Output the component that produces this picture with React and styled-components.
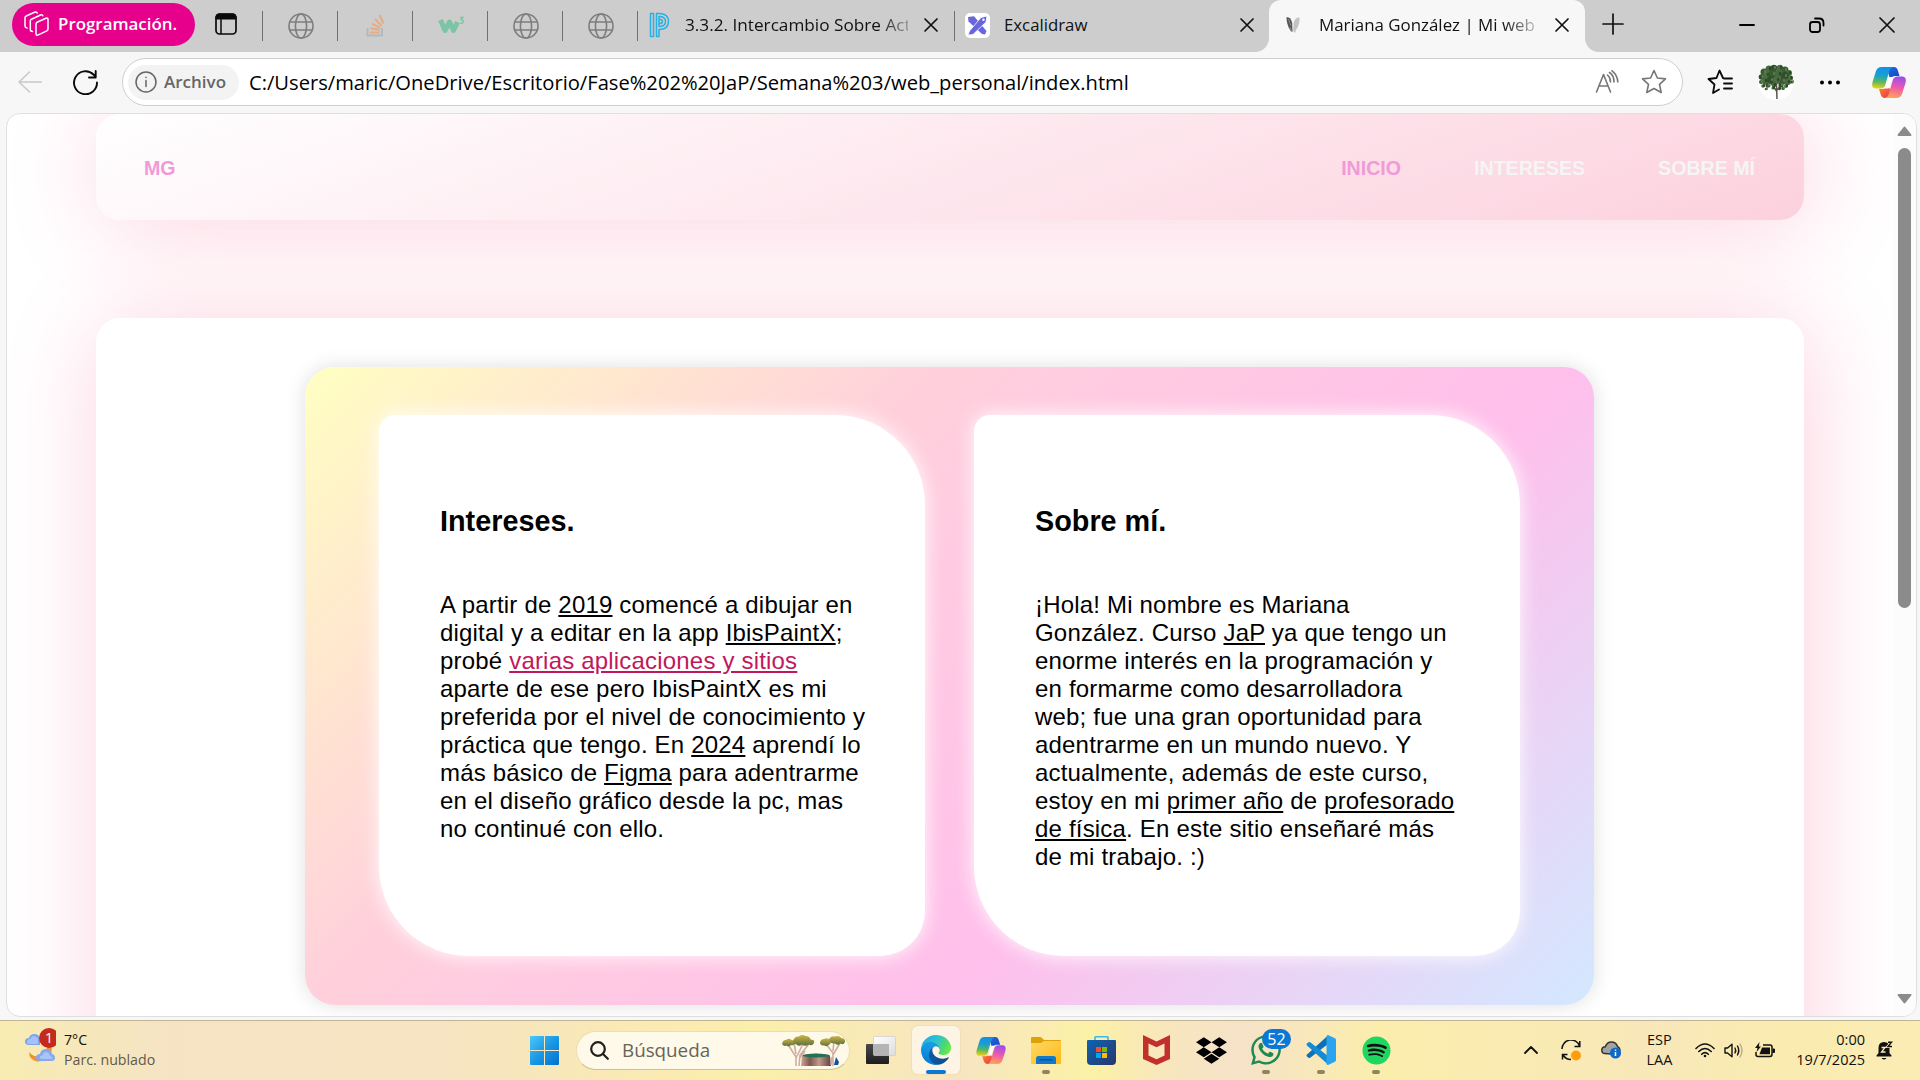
import React from "react";
import styled, { createGlobalStyle } from "styled-components";
import { FaSpotify, FaDropbox, FaWhatsapp } from "react-icons/fa";

const UI = `"Open Sans", "Noto Sans", sans-serif`;
const ARIAL = `"Liberation Sans", Arial, sans-serif`;

const Global = createGlobalStyle`
  * { box-sizing: border-box; }
  html, body { margin: 0; padding: 0; background: #f7f7f7; overflow: hidden; }
  svg { display: block; flex: none; }
`;

const Screen = styled.div`
  width: 1920px;
  height: 1080px;
  overflow: hidden;
  display: flex;
  flex-direction: column;
  background: #f7f7f7;
  font-family: ${UI};
  color: #111;
`;

const Label = styled.span`
  font-size: ${(p) => p.$size}px;
  font-weight: ${(p) => p.$weight || 400};
  color: ${(p) => p.$color || "#111"};
  line-height: ${(p) => p.$line || p.$size * 1.4}px;
  white-space: nowrap;
`;

/* ---------- tab strip ---------- */

const TabStrip = styled.div`
  height: 52px;
  flex: none;
  display: flex;
  align-items: stretch;
  background: #cdcdcd;
`;

const GroupPill = styled.div`
  margin: 3px 0 0 12px;
  width: 183px;
  height: 43px;
  border-radius: 22px;
  background: #e6008c;
  display: flex;
  align-items: center;
  gap: 9px;
  padding: 0 0 2px 12px;
`;

const TabActions = styled.div`
  width: 67px;
  display: flex;
  padding: 13px 0 0 20px;
`;

const PinnedTab = styled.div`
  width: 75px;
  display: flex;
  padding-top: 11px;
`;

const PinnedIcon = styled.div`
  flex: 1;
  height: 29px;
  display: flex;
  align-items: center;
  justify-content: center;
  padding-left: 2px;
`;

const Divider = styled.div`
  width: 1px;
  height: 30px;
  background: #707070;
  flex: none;
`;

const Tab = styled.div`
  width: ${(p) => p.$width}px;
  display: flex;
  padding-top: 11px;
`;

const TabBody = styled.div`
  flex: 1;
  min-width: 0;
  height: 28px;
  display: flex;
  align-items: center;
  padding: 0 ${(p) => p.$right}px 0 ${(p) => p.$left}px;
  gap: ${(p) => p.$gap}px;
`;

const TabTitle = styled.div`
  flex: 1;
  min-width: 0;
  display: flex;
  ${(p) => p.$fade && `mask-image: linear-gradient(90deg, #000 ${p.$fade - 34}px, rgba(0,0,0,.2) ${p.$fade}px);`}
`;

const Flare = styled.div`
  width: 14px;
  background: #f7f7f7;
  display: flex;
  &::before {
    content: "";
    flex: 1;
    background: #cdcdcd;
    border-radius: ${(p) => (p.$side === "left" ? "0 0 14px 0" : "0 0 0 14px")};
  }
`;

const ActiveTab = styled.div`
  width: 316px;
  background: #f7f7f7;
  border-radius: 12px 12px 0 0;
  padding-top: 11px;
  display: flex;
`;

const ActiveBack = styled.div`
  background: #cdcdcd;
  display: flex;
`;

const NewTab = styled.div`
  padding: 13px 0 0 3px;
  flex: 1;
`;

const WindowButtons = styled.div`
  display: flex;
  padding-bottom: 2px;
`;

const WindowButton = styled.div`
  width: 70px;
  padding-left: 3px;
  display: flex;
  align-items: center;
  justify-content: center;
`;

/* ---------- address bar ---------- */

const Toolbar = styled.div`
  height: 61px;
  flex: none;
  display: flex;
  align-items: center;
  padding: 0 14px 1px 18px;
`;

const NavButtons = styled.div`
  display: flex;
  gap: 31px;
  width: 104px;
`;

const Address = styled.div`
  width: 1561px;
  height: 48px;
  border-radius: 24px;
  border: 1px solid #cfcfcf;
  background: #fff;
  display: flex;
  align-items: center;
  padding: 0 15px 0 5px;
`;

const FileChip = styled.div`
  width: 111px;
  height: 35px;
  border-radius: 18px;
  background: #f3f3f3;
  display: flex;
  align-items: center;
  gap: 7px;
  padding-left: 7px;
  margin-right: 10px;
`;

const Url = styled.div`
  flex: 1;
  display: flex;
`;

const AddressIcons = styled.div`
  display: flex;
  align-items: center;
  gap: 22px;
`;

const Extras = styled.div`
  flex: 1;
  display: flex;
  align-items: center;
  padding-left: 24px;
`;

const Extra = styled.div`
  margin-right: ${(p) => p.$gap}px;
`;

/* ---------- web page ---------- */

const Viewport = styled.div`
  margin: 0 3px 0 6px;
  height: 904px;
  flex: none;
  border: 1px solid #dfdfdf;
  border-radius: 14px;
  background: #fff;
  display: flex;
  overflow: hidden;
`;

const Page = styled.div`
  flex: 1;
  min-width: 0;
  overflow: hidden;
  font-family: ${ARIAL};
  padding: 0 89px;
  display: flex;
  flex-direction: column;
`;

const SiteHeader = styled.header`
  height: 106px;
  flex: none;
  border-radius: 24px;
  background: linear-gradient(160deg, #fff, #fcd1de);
  box-shadow: 5px 5px 100px #fcd1de;
  display: flex;
  align-items: center;
  justify-content: space-between;
  padding: 2px 49px 0 48px;
`;

const SiteNav = styled.nav`
  display: flex;
  gap: 73px;
`;

const SiteLink = styled.a`
  font: bold 19.6px/24px ${ARIAL};
  color: ${(p) => (p.$active ? "#f09ad8" : "#f5f5f5")};
`;

const Main = styled.main`
  margin-top: 98px;
  height: 1300px;
  flex: none;
  border-radius: 24px;
  background: #fff;
  box-shadow: 5px 5px 100px #fcd1de;
  display: flex;
  align-items: flex-start;
  padding: 49px 0 0 209px;
`;

const Rainbow = styled.section`
  width: 1289px;
  height: 638px;
  border-radius: 30px;
  background: linear-gradient(135deg, #ffffc2, #ffd0dc 33%, #ffbfec 66%, #d3e8ff);
  box-shadow: 0 0 20px rgba(0, 0, 0, 0.13);
  display: flex;
  gap: 49px;
  padding: 47.5px 74px 49px;
`;

const Card = styled.article`
  width: 546px;
  border-radius: 16px 90px 45px 90px;
  background: #fff;
  box-shadow: 0 0 20px #fff;
  padding: 89px 56px 0 61px;
`;

const CardTitle = styled.h2`
  margin: 0 0 53px;
  font: bold 28.8px/34px ${ARIAL};
  color: #000;
`;

const CardText = styled.p`
  margin: 0;
  font: 24px/28px ${ARIAL};
  letter-spacing: 0.19px;
  color: #000;
`;

const PinkLink = styled.u`
  color: #c2185b;
`;

const Scrollbar = styled.div`
  width: 23px;
  background: #fcfcfc;
  display: flex;
  flex-direction: column;
  align-items: center;
  padding: 12px 0 12px;
`;

const Thumb = styled.div`
  width: 13px;
  height: 460px;
  border-radius: 7px;
  background: #8b8b8b;
  margin: 12px 0 auto;
`;

/* ---------- taskbar ---------- */

const Taskbar = styled.footer`
  margin-top: 3px;
  height: 60px;
  flex: none;
  border-top: 1px solid #bdb594;
  background: linear-gradient(90deg, #f8ecb2 0, #f5e3c4 170px, #f6e4c2 440px, #faeab4 640px, #fbefaa 760px, #f8e8bb 900px, #f7e5c2 960px, #fcf1a6 1090px, #f8e6be 1170px, #f6e2c8 1240px, #fbeeac 1380px, #faebb2 1500px, #f8e8ba 1660px, #faecb0 1780px, #faecb4 1920px);
  display: flex;
  align-items: flex-start;
`;

const Weather = styled.div`
  width: 520px;
  display: flex;
  gap: 8px;
  padding: 6px 0 0 25px;
`;

const TwoLines = styled.div`
  display: flex;
  flex-direction: column;
  align-items: ${(p) => p.$align};
`;

const Tile = styled.div`
  width: 48px;
  height: 48px;
  margin: 5px 7px 0 0;
  border-radius: 6px;
  background: ${(p) => (p.$active ? "rgba(255,250,242,.72)" : "transparent")};
  box-shadow: ${(p) => (p.$active ? "0 0 0 1px rgba(225,205,150,.28)" : "none")};
  display: flex;
  flex-direction: column;
  align-items: center;
  justify-content: space-between;
  flex: none;
  position: relative;
`;

const TileIcon = styled.div`
  height: 44px;
  padding-top: 4px;
  display: flex;
  align-items: center;
`;

const Indicator = styled.div`
  width: ${(p) => (p.$wide ? 20 : 8)}px;
  height: 4px;
  border-radius: 2px;
  background: ${(p) => (p.$wide ? "#0a78d4" : "#8f8460")};
`;

const Badge = styled.div`
  position: absolute;
  left: 20px;
  top: 3px;
  width: 29px;
  height: 20px;
  border-radius: 10px;
  background: #0a78d4;
  display: flex;
  align-items: center;
  justify-content: center;
`;

const Search = styled.div`
  margin: 10px 7px 0 1px;
  width: 274px;
  height: 39px;
  border-radius: 20px;
  background: #fef9e8;
  border: 1px solid #ecdfae;
  border-bottom-color: #cfc18c;
  display: flex;
  align-items: center;
  padding: 0 9px 0 13px;
`;

const SearchLabel = styled.div`
  flex: 1;
  padding-left: 13px;
  display: flex;
`;

const Tray = styled.div`
  flex: 1;
  height: 58px;
  display: flex;
  align-items: center;
  justify-content: flex-end;
  padding-right: 27px;
`;

const TrayItem = styled.div`
  margin-right: ${(p) => p.$gap}px;
  display: flex;
`;

/* ---------- drawings ---------- */

const Stroke = ({ w, h, color = "#111", sw = 1.5, children }) => (
  <svg width={w} height={h || w} viewBox={`0 0 ${w} ${h || w}`} fill="none" stroke={color} strokeWidth={sw} strokeLinecap="round" strokeLinejoin="round">
    {children}
  </svg>
);

const Globe = () => (
  <Stroke w={26} color="#7d7d7d" sw={1.6}>
    <circle cx="13" cy="13" r="12" />
    <ellipse cx="13" cy="13" rx="5.6" ry="12" />
    <path d="M2 9h22M2 17h22" />
  </Stroke>
);

const CloseX = ({ large }) => (
  <Stroke w={16} color="#111" sw={1.7}>
    <path d={large ? "M1 1l14 14M15 1L1 15" : "M2 2l12 12M14 2L2 14"} />
  </Stroke>
);

const GroupIcon = () => (
  <Stroke w={25} color="#fff" sw={1.5}>
    <path d="M13 11.300 22 7.200Q24 6.500 24 8.500V18Q24 19.300 22.800 19.900L14.300 23.900Q12 24.800 12 22.500V13Q12 11.800 13 11.300Z" />
    <path d="M8.500 20.500Q6.300 20.300 6.300 18.500V10Q6.300 8.800 7.500 8.200L16.500 4Q18.300 3.300 18.800 4.800" />
    <path d="M3 17Q1 16.500 1 15V6.800Q1 5.500 2.200 5L10.500 1.200Q12.700 .5 13.200 2" />
  </Stroke>
);

const TabActionsIcon = () => (
  <svg width="22" height="22" viewBox="0 0 22 22">
    <rect x="1" y="1" width="20" height="20" rx="3.500" fill="none" stroke="#0a0a0a" strokeWidth="1.700" />
    <path d="M1 6V4Q1 1 4 1H18Q21 1 21 4V6Z" fill="#0a0a0a" stroke="#0a0a0a" />
    <path d="M6 6V21" stroke="#0a0a0a" strokeWidth="1.500" />
  </svg>
);

const StackIcon = () => (
  <svg width="20" height="23" viewBox="0 0 20 23" fill="none">
    <path d="M1.500 14V21.500H16V14" stroke="#b3b9be" strokeWidth="2" />
    <path d="M4 18.500H13.500M4.300 14.300 13.600 15.900M5.800 9.600 14.200 13.800M9 5 15.500 11.800M13.500 1 17.500 9.500" stroke="#e8ac82" strokeWidth="2.100" />
  </svg>
);

const W3Icon = () => (
  <svg width="26" height="20" viewBox="0 0 26 20" fill="none" stroke="#7cc4a6">
    <path d="M2.500 4 7 14.500 11.500 6 15.500 14.500 19.500 6" strokeWidth="5" strokeLinejoin="round" />
    <path d="M22 1.500H25L23.200 3.800Q25.500 4 25.200 6Q24.500 8 22 7.200" strokeWidth="1.300" />
  </svg>
);

const PIcon = () => (
  <Stroke w={21} h={26} color="#27b1e6" sw={1.5}>
    <path d="M1.500 1.500V24.500H4.500V1.500ZM7.500 1.500V24.500M7.500 1.500H11Q19.500 2 19.500 9.500T11 17.500H10V24.500H7.500M10 14.500H11Q16.500 14 16.500 9.500T11 4.500H10ZM10 11.500H11Q13.500 11.300 13.500 9.500T11 7.500" />
  </Stroke>
);

const ExcalidrawIcon = () => (
  <svg width="25" height="25" viewBox="0 0 25 25">
    <rect width="25" height="25" rx="5" fill="#fff" />
    <path d="M3 4 9 3.200 21.500 18 20 21.500 17 21 3.500 8.500Z" fill="#6965db" />
    <path d="M22 3 16 4.500 4.500 18 3 22 8 21.500 21 9Z" fill="#6965db" stroke="#fff" strokeWidth="0.800" />
    <circle cx="18.500" cy="6.800" r="1.200" fill="#fff" />
  </svg>
);

const WingsIcon = () => (
  <svg width="14" height="18" viewBox="0 0 14 18">
    <path d="M.5 1Q5 1 6.200 7L6.500 16 4.500 14.500Q.5 9 .5 1Z" fill="#555" />
    <path d="M13.500 1.500Q9 1 7.600 7L7.200 15 9 17 10 14Q14 9 13.500 1.500Z" fill="#c4c4c4" />
    <path d="M2.500 3 5 10M4 11 5.500 16" stroke="#999" strokeWidth=".8" />
  </svg>
);

const Copilot = ({ w = 34, h = 31, id }) => (
  <svg width={w} height={h} viewBox="0 0 34 31">
    <defs>
      <linearGradient id={id + "a"} x1="0.500" y1="0" x2="0.400" y2="1">
        <stop offset="0" stopColor="#1190e8" /><stop offset=".4" stopColor="#1b9fd0" /><stop offset=".7" stopColor="#5ab85c" /><stop offset="1" stopColor="#f0cf1a" />
      </linearGradient>
      <linearGradient id={id + "b"} x1=".6" y1="0" x2=".4" y2="1">
        <stop offset="0" stopColor="#9a4cf0" /><stop offset=".5" stopColor="#ee5aa8" /><stop offset="1" stopColor="#ffa552" />
      </linearGradient>
      <linearGradient id={id + "c"} x1="0" y1="0" x2="1" y2="1">
        <stop offset="0" stopColor="#1c6fe0" /><stop offset="1" stopColor="#1a3fc4" />
      </linearGradient>
      <linearGradient id={id + "d"} x1="0" y1="0" x2="1" y2="1">
        <stop offset="0" stopColor="#ff8a1e" /><stop offset="1" stopColor="#e8325a" />
      </linearGradient>
    </defs>
    <path d="M15 0H22Q25 0 26 4L27.500 9H23Q20 9 19 12L17 9Z" fill={`url(#${id}c)`} />
    <path d="M19 31H13Q9.500 31 8.500 27L7 22H11Q14 22 15 19L18 22Z" fill={`url(#${id}d)`} />
    <path d="M9.500 0H21Q18 1 17 5L13.500 17Q12.500 21.500 8.500 21.500H4Q-1 21.500 .5 15L4 4Q5.500 0 9.500 0Z" fill={`url(#${id}a)`} />
    <path d="M24.500 31H13Q16 30 17 26L20.500 14Q21.500 9.500 25.500 9.500H30Q35 9.500 33.500 16L30 27Q28.500 31 24.500 31Z" fill={`url(#${id}b)`} />
    <path d="M18.500 10H21.500Q20 11.500 19 15L17.500 20Q17 21.500 15.500 21.500H13Q14.200 20.500 15 17.500L16.500 12.500Q17 10.500 18.500 10Z" fill="#fff" />
  </svg>
);

const leaves = [
  [6, 8, 3.5], [11, 5, 3.5], [16, 4, 3.2], [22, 4, 3.2], [27, 6, 3.5], [31, 9, 3], [3.5, 13, 2.8], [9, 11, 4], [15, 10, 4.5], [21, 10, 4.5],
  [27, 12, 4], [32.5, 14, 2.6], [3, 18, 2], [7, 17, 3.4], [13, 16, 4], [19, 16, 4], [25, 17, 3.6], [30, 18, 3], [34, 18, 1.500],
  [5, 22, 1.800], [10, 21, 2.600], [16, 21, 2.400], [23, 21, 2.600], [28, 22, 2], [8, 25, 1.300], [15, 24, 1.600], [25, 24.500, 1.600], [21, 25, 1.200],
];

const Tree = () => (
  <svg width="36" height="36" viewBox="0 0 36 36">
    <circle cx="18" cy="18" r="18" fill="#fff" />
    <path d="M18.300 14 19 35M18.500 27 13 19M19 26 25 19" stroke="#5b5146" strokeWidth="1.500" fill="none" />
    {leaves.map(([x, y, r], i) => (
      <circle key={i} cx={x} cy={y} r={r} fill={["#3a5a33", "#456a3e", "#304e2b", "#4b6e42"][i % 4]} />
    ))}
    {leaves.map(([x, y], i) => (
      <ellipse key={i} cx={x + 1} cy={y - 0.5} rx="0.900" ry="1.700" fill={["#5f8254", "#263f22"][i % 2]} />
    ))}
  </svg>
);

const WeatherIcon = () => (
  <svg width="31" height="36" viewBox="0 0 31 36">
    <path d="M22 20A10 10 0 0 1 4 25Q4 33 12 34.500Q22 35 26 26Q28 20 25 18Z" fill="#f0932b" />
    <path d="M4 18Q0 18 0 14.500Q0 11 4 11Q5 7 9.500 7Q14 7 15 12V18Z" fill="#7fa4ee" />
    <path d="M3 17Q1 15 3 12.500Q6 12 7 9.500Q11 8 13 12V17Z" fill="#a6c1f7" />
    <path d="M15 34Q11 34 11 30.500Q11 27 15 27Q16 22 21 22Q26 22 27 27Q30 27.500 30 31Q30 34 26.500 34Z" fill="#86a9ee" />
    <path d="M16 32Q14 31 15 29Q18 29 18.500 26Q23 23 25 29Q28 30 27 32Z" fill="#aac4f8" />
    <circle cx="24" cy="11" r="10" fill="#c42b1c" />
    <text x="24" y="16" textAnchor="middle" fontFamily="Open Sans, sans-serif" fontSize="14" fill="#fff">1</text>
  </svg>
);

const WindowsLogo = () => (
  <svg width="29" height="29" viewBox="0 0 29 29">
    <defs>
      <linearGradient id="win" x1="0" y1="0" x2="1" y2="1">
        <stop offset="0" stopColor="#4cc8fb" /><stop offset=".5" stopColor="#1a98e4" /><stop offset="1" stopColor="#0470cf" />
      </linearGradient>
    </defs>
    <path fill="url(#win)" d="M1 0H14V14H0V1Q0 0 1 0ZM15 0H28Q29 0 29 1V14H15ZM0 15H14V29H1Q0 29 0 28ZM15 15H29V28Q29 29 28 29H15Z" />
  </svg>
);

const Savanna = () => (
  <svg width="63" height="31" viewBox="0 0 63 31">
    <defs>
      <linearGradient id="stump" x1="0" x2="1" y1="0" y2="0">
        <stop offset="0" stopColor="#d0a794" /><stop offset=".3" stopColor="#7c5850" /><stop offset=".6" stopColor="#c39a88" /><stop offset="1" stopColor="#5d4044" />
      </linearGradient>
      <linearGradient id="leaf" x1="0" x2="0" y1="0" y2="1">
        <stop offset="0" stopColor="#c9b548" /><stop offset=".5" stopColor="#98923f" /><stop offset="1" stopColor="#55713f" />
      </linearGradient>
    </defs>
    <path d="M52 30 54 22 57 27 56 30Z" fill="#14509c" />
    <path d="M20 20.500Q34 17 48 20.500L49 31H19Z" fill="url(#stump)" />
    <ellipse cx="34" cy="20.500" rx="13.500" ry="1.900" fill="#1f7254" />
    <g stroke="#cfaca4" strokeWidth="1.600" fill="none">
      <path d="M14 31 14 22 7 11M14 23 21 9M14 19 12 8M17 31 18 20 27 9M17 24 23 16" />
      <path d="M51 31 51 18 44 9M51 20 58 8M51 16 52 6M49 30 50 22" />
    </g>
    <g fill="url(#leaf)">
      <path d="M0 9Q1 4.500 4 5Q7 2.500 9.500 5Q13 5 13 8Q12 11 9 10Q7 12.500 4.500 10.500Q2 12 0 9Z" />
      <path d="M11 6Q12.500 1 17 1.500Q20-1 23.500 1Q28 1 28.500 4.500Q33 4.500 32 8Q30 11.500 27 9.500Q23 12 20 9.500Q17 12 14.500 9.500Q11 9 11 6Z" />
      <path d="M38 7.500Q38.500 4 42 4Q46 2 48 5.500Q50 8.500 47 9.500Q45 12.500 42.500 10.500Q38 11 38 7.500Z" />
      <path d="M47 4.500Q49 .5 53 1.500Q57 0 59.500 3Q63.500 3.500 63 7Q61.500 10.500 58.500 8.500Q56 11 53 8.500Q48 9 47 4.500Z" />
    </g>
  </svg>
);

const TaskViewIcon = () => (
  <svg width="30" height="28" viewBox="0 0 30 28">
    <defs>
      <linearGradient id="tvd" x1="0" y1="0" x2="0" y2="1"><stop offset="0" stopColor="#4a4a4a" /><stop offset="1" stopColor="#1d1d1d" /></linearGradient>
      <linearGradient id="tvl" x1="0" y1="0" x2="1" y2="1"><stop offset="0" stopColor="#fff" /><stop offset="1" stopColor="#dcdcdc" /></linearGradient>
    </defs>
    <rect x="0" y="8" width="23" height="20" rx="1" fill="url(#tvd)" />
    <rect x="7.500" y="0.500" width="22" height="19" rx="1" fill="url(#tvl)" stroke="#c8c8c8" strokeWidth=".6" />
    <rect x="8" y="8" width="15" height="11.500" fill="#b4b4b4" />
  </svg>
);

const EdgeIcon = () => (
  <svg width="30" height="30" viewBox="0 0 256 256">
    <defs>
      <linearGradient id="e1" x1="0" y1=".5" x2="1" y2=".6"><stop offset="0" stopColor="#0c59a4" /><stop offset="1" stopColor="#114a8b" /></linearGradient>
      <linearGradient id="e2" x1=".6" y1="0" x2=".3" y2="1"><stop offset="0" stopColor="#1b9de2" /><stop offset=".4" stopColor="#1595df" /><stop offset="1" stopColor="#0078d7" /></linearGradient>
      <linearGradient id="e3" x1="0" y1=".2" x2="1" y2=".6"><stop offset="0" stopColor="#20a8e8" /><stop offset=".45" stopColor="#2bc3d2" /><stop offset=".8" stopColor="#4fd86c" /><stop offset="1" stopColor="#66eb4e" /></linearGradient>
    </defs>
    <path fill="url(#e1)" d="M231 190.500c-3.400 1.800-6.900 3.400-10.500 4.700a101.700 101.700 0 0 1-35.900 6.500c-47.300 0-88.500-32.500-88.500-74.300 0-11.400 6.400-21.900 16.400-27.300-42.800 1.800-53.800 46.400-53.800 72.500 0 73.900 68.100 81.400 82.800 81.400 7.900 0 19.800-2.300 27-4.600l1.300-.4a128.300 128.300 0 0 0 66.600-52.800 4 4 0 0 0-5.400-5.700z" />
    <path fill="url(#e2)" d="M105.700 241.400a79.200 79.200 0 0 1-22.700-21.300 80.700 80.700 0 0 1 29.500-120c3.200-1.500 8.500-4.100 15.600-4a32.400 32.400 0 0 1 25.700 13 31.900 31.900 0 0 1 6.300 18.700c0-.2 24.500-79.600-80-79.600-43.900 0-80 41.600-80 78.200a130.200 130.200 0 0 0 12.100 56 128 128 0 0 0 156.400 67 75.500 75.500 0 0 1-62.800-8z" />
    <path fill="url(#e3)" d="M152.300 148.900c-.9 1-3.400 2.500-3.400 5.600 0 2.600 1.700 5.200 4.800 7.300 14.400 10.100 41.700 8.700 41.700 8.700a59.600 59.600 0 0 0 30.300-8.300 61.400 61.400 0 0 0 30.400-52.900c.3-22.400-8-37.300-11.300-43.900C223.500 23.900 177.700 0 128 0A128 128 0 0 0 0 126.200c.5-36.500 36.800-66 80-66 3.500 0 23.500.3 42 10 16.300 8.600 24.900 19 30.800 29.200 6.200 10.700 7.300 24.200 7.300 29.500 0 5.400-2.700 13.300-7.800 20z" />
  </svg>
);

const FolderIcon = () => (
  <svg width="30" height="27" viewBox="0 0 30 27">
    <defs><linearGradient id="fo" x1="0" y1="0" x2="1" y2="1"><stop offset="0" stopColor="#ffd968" /><stop offset="1" stopColor="#fdb813" /></linearGradient></defs>
    <path d="M0 1Q0 0 1 0H9Q10 0 11 1L13 3H29Q30 3 30 4V10H0Z" fill="#e0a008" />
    <path d="M0 6H10L13 4H30V26Q30 27 29 27H1Q0 27 0 26Z" fill="url(#fo)" />
    <path d="M5 27V21.500Q5 19 7.500 19H22.500Q25 19 25 21.500V27Z" fill="#1079c9" />
    <path d="M8.500 22.800H21.500" stroke="#0b4f93" strokeWidth="1.300" />
  </svg>
);

const StoreIcon = () => (
  <svg width="29" height="29" viewBox="0 0 29 29">
    <defs><linearGradient id="st" x1="0" y1="0" x2="1" y2="1"><stop offset="0" stopColor="#0e63b4" /><stop offset="1" stopColor="#28366b" /></linearGradient></defs>
    <path d="M8 5.500V1.500Q8 .8 8.700 .8H20.300Q21 .8 21 1.500V5.500" fill="none" stroke="#35b9ee" strokeWidth="1.600" />
    <path d="M0 5Q0 4 1 4H28Q29 4 29 5V25Q29 29 25 29H4Q0 29 0 25Z" fill="url(#st)" />
    <path fill="#f25022" d="M9 11h5v5H9z" /><path fill="#7fba00" d="M15 11h5v5h-5z" />
    <path fill="#00a4ef" d="M9 17h5v5H9z" /><path fill="#ffb900" d="M15 17h5v5h-5z" />
  </svg>
);

const McAfeeIcon = () => (
  <svg width="27" height="30" viewBox="0 0 27 30">
    <path d="M0 0 13.500 6.500 27 0V24L13.500 30 0 24ZM5.500 8.500V20.500L13.500 24.200 21.500 20.500V8.500L13.500 12.300Z" fill="#c32f2d" fillRule="evenodd" />
  </svg>
);

const VsCodeIcon = () => (
  <svg width="30" height="30" viewBox="0 0 30 30">
    <path d="M22 0.500 1 19.500Q0 20.500 1 21.500L2.500 22.800Q3.300 23.300 4.200 22.700L22 9Z" fill="#0f6fb8" />
    <path d="M22 29.500 1 10.500Q0 9.500 1 8.500L2.500 7.200Q3.300 6.700 4.200 7.300L22 21Z" fill="#138bd6" />
    <path d="M22 0 29 3.200Q30 3.700 30 5V25Q30 26.300 29 26.800L22 30Q20 30 20.500 28V2Q20.500 0 22 0Z" fill="#2aa4ee" />
  </svg>
);

const SpotifyMark = styled.div`
  width: 29px;
  height: 29px;
  border-radius: 50%;
  background: radial-gradient(#111 62%, transparent 64%);
  color: #1ed760;
  font-size: 29px;
  line-height: 0;
`;

const pinned = ["globe", "stack", "w3", "globe", "globe"];

export default function App() {
  return (
    <Screen>
      <Global />
      <TabStrip>
        <GroupPill>
          <GroupIcon />
          <Label $size={16.9} $weight={600} $color="#fff">Programación.</Label>
        </GroupPill>
        <TabActions><TabActionsIcon /></TabActions>
        {pinned.map((kind, i) => (
          <PinnedTab key={i}>
            <Divider />
            <PinnedIcon>
              {kind === "globe" && <Globe />}
              {kind === "stack" && <StackIcon />}
              {kind === "w3" && <W3Icon />}
            </PinnedIcon>
          </PinnedTab>
        ))}
        <Tab $width={317}>
          <Divider />
          <TabBody $left={11} $right={15} $gap={15}>
            <PIcon />
            <TabTitle $fade={227}><Label $size={17.2}>3.3.2. Intercambio Sobre Act</Label></TabTitle>
            <CloseX />
          </TabBody>
        </Tab>
        <Tab $width={301}>
          <Divider />
          <TabBody $left={10} $right={0} $gap={14}>
            <ExcalidrawIcon />
            <TabTitle><Label $size={16.8}>Excalidraw</Label></TabTitle>
            <CloseX />
          </TabBody>
        </Tab>
        <Flare $side="left" />
        <ActiveBack>
          <ActiveTab>
            <TabBody $left={17} $right={15} $gap={19}>
              <WingsIcon />
              <TabTitle $fade={218}><Label $size={16.9}>Mariana González | Mi web</Label></TabTitle>
              <CloseX />
            </TabBody>
          </ActiveTab>
        </ActiveBack>
        <Flare $side="right" />
        <NewTab>
          <Stroke w={22} color="#111" sw={1.7}><path d="M11 1V21M1 11H21" /></Stroke>
        </NewTab>
        <WindowButtons>
          <WindowButton><Stroke w={16} color="#000" sw={1.8}><path d="M1 8H15" /></Stroke></WindowButton>
          <WindowButton>
            <Stroke w={16} color="#000" sw={1.8}>
              <rect x="1" y="5" width="10" height="10" rx="2.500" />
              <path d="M6 1.500H10Q14.500 1.500 14.500 6V8.500" />
            </Stroke>
          </WindowButton>
          <WindowButton><CloseX large /></WindowButton>
        </WindowButtons>
      </TabStrip>

      <Toolbar>
        <NavButtons>
          <Stroke w={24} color="#c9c9c9" sw={1.6}><path d="M23.500 12H1M11.500 2 1 12 11.500 22" /></Stroke>
          <Stroke w={25} color="#0a0a0a" sw={1.9}><path d="M24 12.500A11.500 11.500 0 1 1 20.500 4.500L22.500 6.500M22.700 1V7.500H16" /></Stroke>
        </NavButtons>
        <Address>
          <FileChip>
            <Stroke w={22} color="#666" sw={1.5}><circle cx="11" cy="11" r="10" /><path d="M11 9.500V15.500M11 6.300V6.500" /></Stroke>
            <Label $size={17} $weight={600} $color="#666">Archivo</Label>
          </FileChip>
          <Url><Label $size={20.15} $color="#000">C:/Users/maric/OneDrive/Escritorio/Fase%202%20JaP/Semana%203/web_personal/index.html</Label></Url>
          <AddressIcons>
            <Stroke w={24} color="#767676" sw={1.6}>
              <path d="M1.500 22 8.500 4.500 15.500 22M4 16H13M12.500 5Q15.500 7.500 15.500 12M14.500 2.500Q19 5.500 19 12M17 .8Q22.500 5 22.800 12" />
            </Stroke>
            <Stroke w={26} color="#767676" sw={1.6}>
              <path d="M13 1.500 16.400 9 24.500 9.900 18.500 15.400 20.200 23.500 13 19.500 5.800 23.500 7.500 15.400 1.500 9.900 9.600 9Z" />
            </Stroke>
          </AddressIcons>
        </Address>
        <Extras>
          <Extra $gap={25}>
            <Stroke w={26} color="#0a0a0a" sw={1.8}>
              <path d="M16 9 12.500 1.500 9.500 9 1.500 10 7.500 15.500 6 24 12 20.500M17 9.500H25M17 14.500H25M17 19.500H25" />
            </Stroke>
          </Extra>
          <Extra $gap={26}><Tree /></Extra>
          <Extra $gap={32}>
            <svg width="20" height="5" viewBox="0 0 20 5"><circle cx="2" cy="2.500" r="2" /><circle cx="10" cy="2.500" r="2" /><circle cx="18" cy="2.500" r="2" /></svg>
          </Extra>
          <Copilot id="cpt" />
        </Extras>
      </Toolbar>

      <Viewport>
        <Page>
          <SiteHeader>
            <SiteLink $active>MG</SiteLink>
            <SiteNav>
              <SiteLink $active>INICIO</SiteLink>
              <SiteLink>INTERESES</SiteLink>
              <SiteLink>SOBRE MÍ</SiteLink>
            </SiteNav>
          </SiteHeader>
          <Main>
            <Rainbow>
              <Card>
                <CardTitle>Intereses.</CardTitle>
                <CardText>
                  A partir de <u>2019</u> comencé a dibujar en digital y a editar en la app <u>IbisPaintX</u>; probé{" "}
                  <PinkLink>varias aplicaciones y sitios</PinkLink> aparte de ese pero IbisPaintX es mi preferida por el
                  nivel de conocimiento y práctica que tengo. En <u>2024</u> aprendí lo más básico de <u>Figma</u> para
                  adentrarme en el diseño gráfico desde la pc, mas no continué con ello.
                </CardText>
              </Card>
              <Card>
                <CardTitle>Sobre mí.</CardTitle>
                <CardText>
                  ¡Hola! Mi nombre es Mariana González. Curso <u>JaP</u> ya que tengo un enorme interés en la
                  programación y en formarme como desarrolladora
                  <br />
                  web; fue una gran oportunidad para adentrarme en un mundo nuevo. Y actualmente, además de este curso,
                  estoy en mi <u>primer año</u> de <u>profesorado de física</u>. En este sitio enseñaré más de mi
                  trabajo. :)
                </CardText>
              </Card>
            </Rainbow>
          </Main>
        </Page>
        <Scrollbar>
          <svg width="15" height="10" viewBox="0 0 15 10"><path d="M7.500 1.500 13.500 9H1.500Z" fill="#8b8b8b" stroke="#8b8b8b" strokeWidth="2" strokeLinejoin="round" /></svg>
          <Thumb />
          <svg width="15" height="10" viewBox="0 0 15 10"><path d="M7.500 8.500 1.500 1H13.500Z" fill="#8b8b8b" stroke="#8b8b8b" strokeWidth="2" strokeLinejoin="round" /></svg>
        </Scrollbar>
      </Viewport>

      <Taskbar>
        <Weather>
          <WeatherIcon />
          <TwoLines $align="flex-start">
            <Label $size={14.2} $line={26}>7°C</Label>
            <Label $size={14.2} $line={14} $color="#5f5a48">Parc. nublado</Label>
          </TwoLines>
        </Weather>
        <Tile><TileIcon><WindowsLogo /></TileIcon></Tile>
        <Search>
          <Stroke w={19} color="#1f1f1f" sw={2.2}><circle cx="8" cy="8" r="6.800" /><path d="M13 13 17.800 17.800" /></Stroke>
          <SearchLabel><Label $size={18.8} $color="#66645a">Búsqueda</Label></SearchLabel>
          <Extra $gap={-5}><Savanna /></Extra>
        </Search>
        <Tile><TileIcon><TaskViewIcon /></TileIcon></Tile>
        <Tile $active><TileIcon><EdgeIcon /></TileIcon><Indicator $wide /></Tile>
        <Tile><TileIcon><Copilot id="cpb" w={30} h={27} /></TileIcon></Tile>
        <Tile><TileIcon><FolderIcon /></TileIcon><Indicator /></Tile>
        <Tile><TileIcon><StoreIcon /></TileIcon></Tile>
        <Tile><TileIcon><McAfeeIcon /></TileIcon></Tile>
        <Tile><TileIcon><FaDropbox size={31} color="#000" /></TileIcon></Tile>
        <Tile>
          <TileIcon><FaWhatsapp size={34} color="#1c8a54" /></TileIcon>
          <Indicator />
          <Badge><Label $size={16} $color="#fff" $line={20}>52</Label></Badge>
        </Tile>
        <Tile><TileIcon><VsCodeIcon /></TileIcon><Indicator /></Tile>
        <Tile><TileIcon><SpotifyMark><FaSpotify /></SpotifyMark></TileIcon><Indicator /></Tile>
        <Tray>
          <TrayItem $gap={23}><Stroke w={14} h={8} sw={1.8}><path d="M1 7 7 1 13 7" /></Stroke></TrayItem>
          <TrayItem $gap={20}>
            <svg width="20" height="21" viewBox="0 0 20 21" fill="none" stroke="#111" strokeWidth="1.500">
              <path d="M1 9A9 9 0 0 1 18.500 6M18.800 1V6.500H13.500M1.500 19.500V14.500H6.500M2 15Q5 19.500 10 19.500" />
              <circle cx="15" cy="15.500" r="5" fill="#ff9d0a" stroke="none" />
            </svg>
          </TrayItem>
          <TrayItem $gap={25}>
            <svg width="20" height="18" viewBox="0 0 20 18">
              <path d="M4 12.500Q.8 12.500 .8 9.300Q.8 6 4.300 5.800Q6 1 10.500 1Q15 1 16.500 5.500Q19 7 19 9L10 13Z" fill="#a3a3a3" stroke="#333" strokeWidth="1.500" />
              <circle cx="14.500" cy="12" r="5.600" fill="#0b6bc7" />
              <path d="M14.500 11V15M14.500 8.500V9.800" stroke="#fff" strokeWidth="1.500" />
            </svg>
          </TrayItem>
          <TrayItem $gap={23}>
            <TwoLines $align="center">
              <Label $size={14.5} $line={20}>ESP</Label>
              <Label $size={14.5} $line={20}>LAA</Label>
            </TwoLines>
          </TrayItem>
          <TrayItem $gap={9}>
            <Stroke w={20} h={15} sw={1.6}>
              <path d="M1 5.500Q10-3.500 19 5.500M3.800 8.500Q10 2.500 16.200 8.500M6.700 11.300Q10 8 13.300 11.300" />
              <circle cx="10" cy="13" r="1.300" fill="#111" stroke="none" />
            </Stroke>
          </TrayItem>
          <TrayItem $gap={11}>
            <Stroke w={20} h={15} sw={1.4}>
              <path d="M1 5V10H3.500L8 13.800V1.200L3.500 5ZM11 5Q12.500 7.500 11 10M13.500 3Q16 7.500 13.500 12" />
              <path d="M16 1Q20 7.500 16 14" stroke="#b9ae83" />
            </Stroke>
          </TrayItem>
          <TrayItem $gap={21}>
            <svg width="20" height="16" viewBox="0 0 20 16">
              <path d="M8 3H15Q17 3 17 5V12Q17 14.500 15 14.500H3Q1 14.500 1 12.500V10" fill="none" stroke="#111" strokeWidth="1.500" />
              <path d="M7 5.500H15V12.200H4.500Z" fill="#111" /><path d="M18 7H19.500V10.500H18Z" fill="#111" stroke="#111" />
              <path d="M4.500 0 0 6H2.500L1.500 10 6 4.500H3.800Z" fill="#111" />
            </svg>
          </TrayItem>
          <TrayItem $gap={11}>
            <TwoLines $align="flex-end">
              <Label $size={14.5} $line={20}>0:00</Label>
              <Label $size={14.5} $line={20}>19/7/2025</Label>
            </TwoLines>
          </TrayItem>
          <svg width="17" height="19" viewBox="0 0 17 19">
            <path d="M8 1Q2.500 1 2.500 7V12L.5 14.500V15.500H15.500V14.500L13.500 12V7Q13.500 1 8 1ZM5.500 17H10.500Q8 20 5.500 17Z" fill="#111" />
            <path d="M12 1H16L12 5.500H16.500" stroke="#faecb4" strokeWidth="3" fill="none" />
            <path d="M5.500 6.500H9L5.500 11H9.500" stroke="#faecb4" strokeWidth="1.300" fill="none" />
            <path d="M12 1.200H15.500L12 5.500H16" stroke="#111" strokeWidth="1.400" fill="none" />
          </svg>
        </Tray>
      </Taskbar>
    </Screen>
  );
}
